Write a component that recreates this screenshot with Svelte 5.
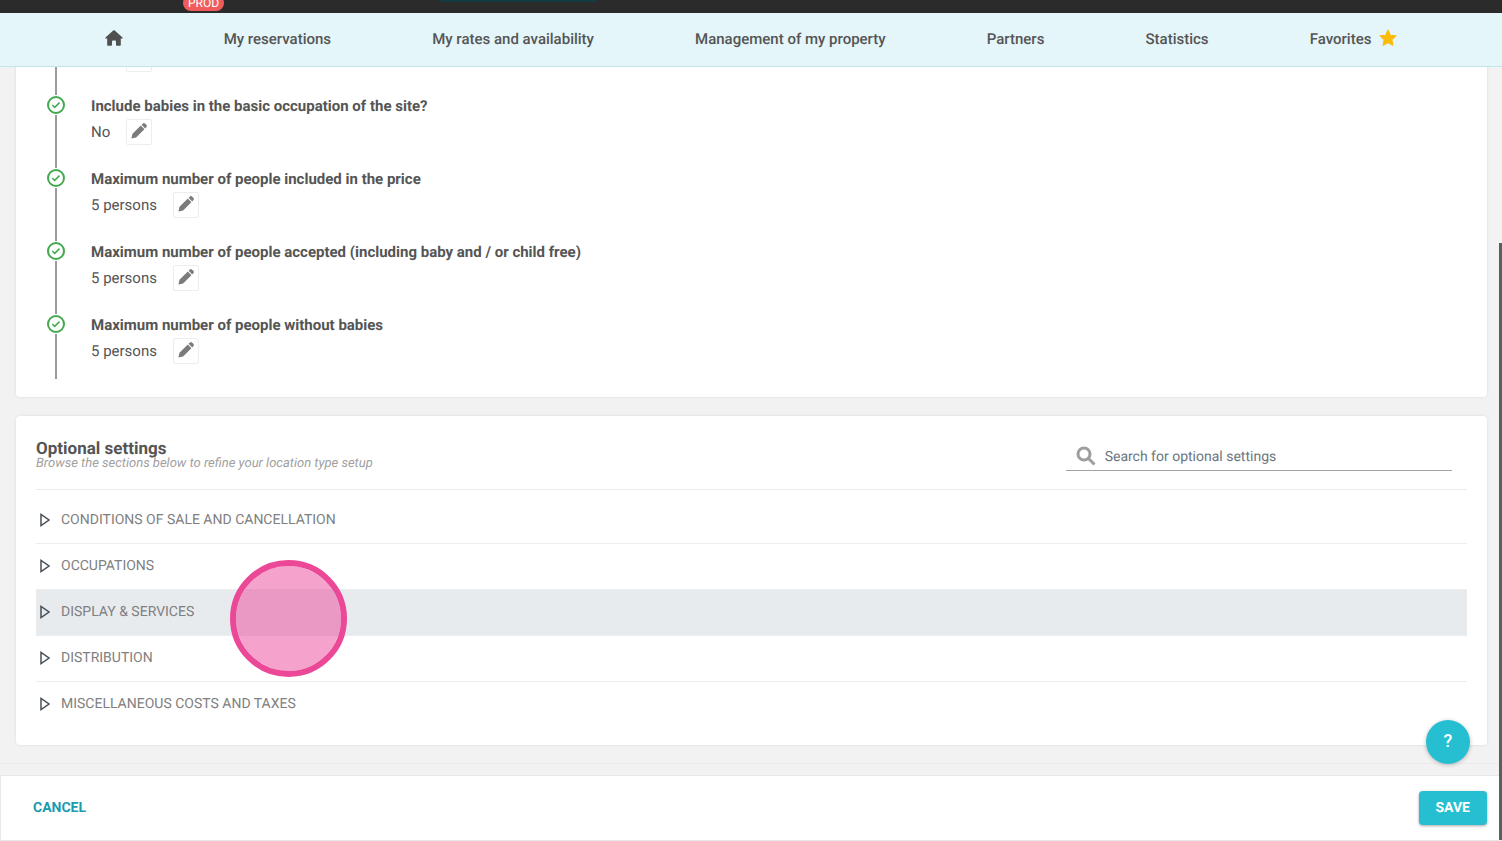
<script lang="ts">
  interface Step {
    id: string;
    title: string;
    value: string;
  }

  const links = [
    'My reservations',
    'My rates and availability',
    'Management of my property',
    'Partners',
    'Statistics',
  ];

  const steps: Step[] = [
    { id: 'previous', title: '', value: '' },
    { id: 'babies', title: 'Include babies in the basic occupation of the site?', value: 'No' },
    { id: 'included', title: 'Maximum number of people included in the price', value: '5 persons' },
    {
      id: 'accepted',
      title: 'Maximum number of people accepted (including baby and / or child free)',
      value: '5 persons',
    },
    { id: 'without', title: 'Maximum number of people without babies', value: '5 persons' },
  ];

  const sections = [
    'Conditions of sale and cancellation',
    'Occupations',
    'Display & services',
    'Distribution',
    'Miscellaneous costs and taxes',
  ];

  let hovered = $state(2);
  let search = $state('');
</script>

<div class="page">
  <div class="topbar">
    <span class="env">PROD</span>
    <span class="topbar-tab"></span>
  </div>

  <nav class="nav">
    <a href="#home" aria-label="Home">
      <svg class="home" viewBox="0 0 18 16" aria-hidden="true">
        <path
          d="M8.2.6a1.2 1.2 0 0 1 1.6 0l7.7 6.8c.5.5.2 1.1-.4 1.1h-1.3v6.2c0 .6-.4 1-1 1h-3c-.5 0-.8-.4-.8-.9v-3.2c0-.7-.5-1.2-1.2-1.2H8.2c-.7 0-1.2.5-1.2 1.2v3.2c0 .5-.3.9-.8.9h-3c-.6 0-1-.4-1-1V8.500H.9c-.6 0-.9-.6-.4-1.100z"
        />
      </svg>
    </a>
    {#each links as link (link)}
      <a href="#{link.toLowerCase().replaceAll(' ', '-')}">{link}</a>
    {/each}
    <a href="#favorites">
      Favorites
      <svg class="star" viewBox="0 0 16 16" aria-hidden="true">
        <path
          d="M8 1l2.100 4.500 4.900.6-3.600 3.400.9 4.900L8 12l-4.300 2.400.9-4.900L1 6.100l4.900-.6z"
        />
      </svg>
    </a>
  </nav>

  <main class="content">
    <section class="card card--steps">
      <ol class="steps">
        {#each steps as step (step.id)}
          <li class="step">
            <div class="marker">
              <svg class="check" viewBox="0 0 20 20" aria-hidden="true">
                <circle cx="10" cy="10" r="8" />
                <path d="M6.300 10l2.400 2.400 4.800-4.800" />
              </svg>
            </div>
            <div class="step-body">
              <h3>{step.title}</h3>
              <div class="step-value">
                <span>{step.value}</span>
                <button class="edit" type="button" aria-label="Edit {step.title}">
                  <svg viewBox="0 0 16 16" aria-hidden="true">
                    <path d="M.4 15.600l1.100-4.900L9.800 2.600l3.600 3.600-8.300 8.200z" />
                    <path d="M10.600 1.800l1.100-1.100a1.800 1.800 0 0 1 2.500 0l1.100 1.100a1.800 1.800 0 0 1 0 2.500l-1.100 1.100z" />
                  </svg>
                </button>
              </div>
            </div>
          </li>
        {/each}
      </ol>
    </section>

    <section class="card card--optional">
      <header class="optional-head">
        <div>
          <h2>Optional settings</h2>
          <p>Browse the sections below to refine your location type setup</p>
        </div>
        <label class="search">
          <svg viewBox="0 0 20 20" aria-hidden="true">
            <circle cx="8" cy="8" r="6" />
            <path d="M12.500 12.500l6 6" />
          </svg>
          <input
            type="text"
            placeholder="Search for optional settings"
            aria-label="Search for optional settings"
            bind:value={search}
          />
        </label>
      </header>
      <ul class="sections">
        {#each sections as section, index (section)}
          <li>
            <button
              class="section"
              class:section--hover={index === hovered}
              type="button"
              onmouseenter={() => (hovered = index)}
            >
              <svg viewBox="0 0 10 14" aria-hidden="true">
                <path d="M1 1.500v11L9 7z" />
              </svg>
              {section}
            </button>
          </li>
        {/each}
      </ul>
    </section>
    <hr />
  </main>

  <footer class="actions">
    <button class="cancel" type="button">Cancel</button>
    <button class="save" type="button">Save</button>
  </footer>

  <button class="help" type="button" aria-label="Help">?</button>
  <div class="scrollbar"></div>
  <div class="pointer"></div>
</div>

<style>
  :global(body) {
    margin: 0;
    background: #f2f2f2;
  }

  .page {
    position: relative;
    display: flex;
    flex-direction: column;
    height: 100vh;
    overflow: hidden;
    color: #555;
    font-family: Roboto, 'Liberation Sans', sans-serif;
    font-size: 15px;
    line-height: 20px;
    text-rendering: geometricPrecision;
  }

  button {
    margin: 0;
    padding: 0;
    border: 0;
    background: none;
    color: inherit;
    font: inherit;
    text-rendering: inherit;
    cursor: pointer;
  }

  h2,
  h3,
  p,
  ol,
  ul {
    margin: 0;
    padding: 0;
    list-style: none;
  }

  .topbar {
    position: relative;
    display: flex;
    align-items: flex-end;
    flex: none;
    height: 13px;
    overflow: hidden;
    background: #2b2b2b;
  }

  .env {
    margin: 0 0 2px 183px;
    padding: 0 5px;
    border-radius: 8px;
    background: #f15b5b;
    color: #fff;
    font-size: 12px;
    line-height: 16px;
  }

  .topbar-tab {
    align-self: flex-start;
    width: 156px;
    height: 2px;
    margin-left: 216px;
    background: #123c42;
  }

  .nav {
    display: flex;
    align-items: center;
    justify-content: space-around;
    flex: none;
    box-sizing: border-box;
    height: 54px;
    padding: 0 54px 2px;
    border-bottom: 1px solid #bfe6ec;
    background: #e4f6fa;
  }

  .nav a {
    display: flex;
    align-items: center;
    gap: 8px;
    color: #555;
    font-weight: 500;
    text-decoration: none;
  }

  .home {
    width: 18px;
    height: 16px;
    margin-bottom: 2px;
    fill: #505050;
  }

  .star {
    width: 18px;
    height: 18px;
    margin-bottom: 2px;
    fill: #fbbc05;
    stroke: #fbbc05;
    stroke-linejoin: round;
  }

  .content {
    display: flex;
    flex-direction: column;
    justify-content: flex-end;
    flex: 1;
    min-height: 0;
    overflow: hidden;
    padding: 0 15px;
  }

  .card {
    border-radius: 4px;
    background: #fff;
    box-shadow: 0 0 3px rgba(0, 0, 0, 0.1);
  }

  .card--steps {
    margin-bottom: 19px;
    margin-left: 1px;
    padding: 0 30px 18px;
  }

  .step {
    display: flex;
    gap: 25px;
  }

  .marker {
    display: flex;
    flex-direction: column;
    align-items: center;
    width: 20px;
  }

  .marker::after {
    flex: 1;
    width: 2px;
    background: #9b9b9b;
    content: '';
  }

  .check {
    flex: none;
    width: 20px;
    height: 20px;
    fill: none;
    stroke: #43a950;
    stroke-width: 2;
  }

  .check path {
    stroke-width: 1.5;
  }

  .step-body {
    padding-bottom: 24px;
  }

  .step:last-child .step-body {
    padding-bottom: 16px;
  }

  h3 {
    height: 20px;
    margin-bottom: 4px;
    font-size: 15px;
    font-weight: 700;
    line-height: 22px;
  }

  .step-value {
    display: flex;
    gap: 16px;
    height: 25px;
    line-height: 26px;
  }

  .step:first-child .step-value span {
    width: 19px;
  }

  .edit {
    display: flex;
    align-items: center;
    justify-content: center;
    box-sizing: border-box;
    width: 26px;
    height: 26px;
    padding-bottom: 2px;
    border: 1px solid #ededed;
    border-radius: 2px;
  }

  .edit svg {
    width: 16px;
    height: 16px;
    fill: #7b7b7b;
  }

  .card--optional {
    margin-left: 1px;
    padding: 0 20px 18px;
  }

  .optional-head {
    display: flex;
    align-items: flex-end;
    justify-content: space-between;
    height: 55px;
    padding-bottom: 18px;
    border-bottom: 1px solid #ebebeb;
  }

  h2 {
    font-size: 17px;
    font-weight: 700;
    line-height: 16px;
  }

  p {
    color: #a0a0a0;
    font-size: 13px;
    font-style: italic;
    line-height: 14px;
  }

  .search {
    display: flex;
    align-items: center;
    gap: 9px;
    box-sizing: border-box;
    width: 27%;
    height: 30px;
    margin-right: 15px;
    padding-left: 10px;
    border-bottom: 1px solid #a0a4a6;
  }

  .search svg {
    flex: none;
    width: 20px;
    height: 20px;
    fill: none;
    stroke: #9e9e9e;
    stroke-width: 3;
  }

  .search input {
    flex: 1;
    min-width: 0;
    padding: 2px 0 0;
    border: 0;
    outline: 0;
    background: none;
    color: #505050;
    font: inherit;
    font-size: 14px;
    text-rendering: inherit;
  }

  .search input::placeholder {
    color: #6c757d;
    opacity: 1;
  }

  .sections {
    padding-top: 7px;
  }

  .section {
    display: flex;
    align-items: center;
    gap: 11px;
    box-sizing: border-box;
    width: 100%;
    height: 46px;
    padding: 0 0 1px 4px;
    color: #808080;
    font-size: 14px;
    text-align: left;
    text-transform: uppercase;
  }

  li + li .section {
    border-top: 1px solid #ebedef;
  }

  .section--hover {
    background: #e8ebee;
  }

  .section svg {
    width: 10px;
    height: 14px;
    fill: none;
    stroke: #495057;
    stroke-width: 1.5;
  }

  hr {
    flex: none;
    height: 1px;
    margin: 18px -15px 11px;
    border: 0;
    background: #ebebeb;
  }

  .actions {
    display: flex;
    align-items: center;
    justify-content: space-between;
    flex: none;
    box-sizing: border-box;
    height: 66px;
    padding: 0 14px 0 32px;
    border: 1px solid #e8e8e8;
    background: #fff;
    font-size: 14px;
    font-weight: 700;
  }

  .cancel,
  .save {
    text-transform: uppercase;
  }

  .cancel {
    color: #1a9baf;
  }

  .save {
    height: 34px;
    padding: 0 17px 1px;
    border-radius: 4px;
    background: #26bfd1;
    box-shadow: 0 1px 3px rgba(0, 0, 0, 0.35);
    color: #fff;
  }

  .help {
    position: absolute;
    right: 32px;
    bottom: 77px;
    width: 44px;
    height: 44px;
    border-radius: 50%;
    background: #26bfd1;
    box-shadow: 0 1px 4px rgba(0, 0, 0, 0.25);
    color: #fff;
    font-size: 18px;
    font-weight: 500;
  }

  .scrollbar {
    position: absolute;
    top: 243px;
    right: 0;
    bottom: 1px;
    width: 3px;
    background: #5a5e60;
  }

  .pointer {
    position: absolute;
    top: 560px;
    left: 230px;
    box-sizing: border-box;
    width: 117px;
    height: 117px;
    border: 6px solid #eb4898;
    border-radius: 50%;
    background: rgba(236, 72, 153, 0.5);
    background-clip: padding-box;
    pointer-events: none;
  }
</style>
